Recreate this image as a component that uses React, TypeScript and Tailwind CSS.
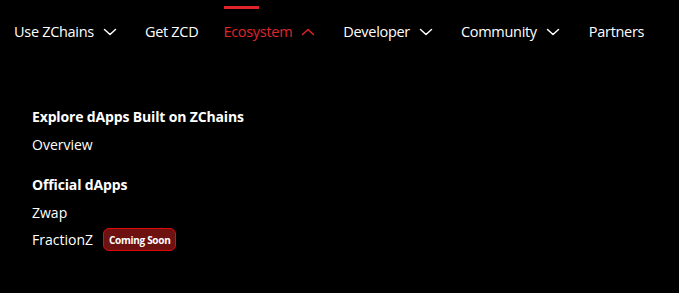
import React from "react";

const Chevron = ({ up = false, color = "#ffffff" }: { up?: boolean; color?: string }) => (
  <svg width="14" height="8" viewBox="0 0 14 8" className="ml-[9px]" fill="none">
    <path
      d={up ? "M1.5 6.5 L7 1.5 L12.5 6.5" : "M1.5 1.5 L7 6.5 L12.5 1.5"}
      stroke={color}
      strokeWidth="1.5"
      strokeLinecap="round"
      strokeLinejoin="round"
    />
  </svg>
);

export default function App() {
  return (
    <div className="w-[679px] h-[293px] bg-black text-white overflow-hidden" style={{ fontFamily: "'Open Sans', 'Noto Sans', sans-serif" }}>
      <nav className="flex items-center h-[64px] pl-[14px] text-[14.5px] tracking-[-0.3px]">
        <div className="flex items-center">
          <span>Use ZChains</span>
          <Chevron />
        </div>
        <div className="ml-[28px]">Get ZCD</div>
        <div className="relative ml-[25px] flex items-center text-[#e0242b]">
          <span className="absolute left-[1px] top-[-15px] w-[35px] h-[3px] bg-[#e0242b]" />
          <span>Ecosystem</span>
          <Chevron up color="#e0242b" />
        </div>
        <div className="ml-[28px] flex items-center">
          <span>Developer</span>
          <Chevron />
        </div>
        <div className="ml-[28px] flex items-center">
          <span>Community</span>
          <Chevron />
        </div>
        <div className="ml-[29px]">Partners</div>
      </nav>
      <div className="pl-[32px] pt-[43px] text-[14px]">
        <div className="font-bold leading-[20px] tracking-[-0.15px]">Explore dApps Built on ZChains</div>
        <div className="mt-[8px] leading-[20px]">Overview</div>
        <div className="mt-[20px] font-bold leading-[20px] tracking-[-0.15px]">Official dApps</div>
        <div className="mt-[8px] leading-[20px]">Zwap</div>
        <div className="mt-[5px] flex items-center leading-[20px]">
          <span>FractionZ</span>
          <span className="ml-[10px] px-[5px] h-[23px] flex items-center rounded-[6px] border border-[#e00a0a] bg-[#6e1111] text-[10px] font-bold tracking-[-0.3px]">
            Coming Soon
          </span>
        </div>
      </div>
    </div>
  );
}
